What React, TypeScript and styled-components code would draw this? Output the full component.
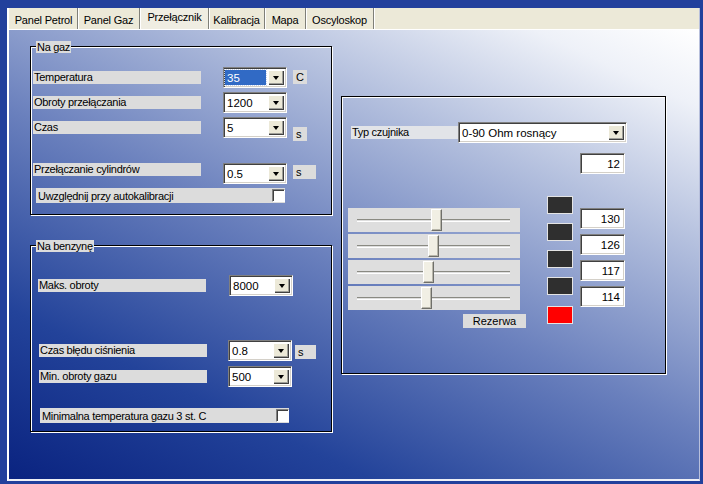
import React from 'react';
import styled, { createGlobalStyle } from 'styled-components';

const GlobalStyle = createGlobalStyle`
  html, body { margin: 0; padding: 0; }
  body {
    width: 703px;
    height: 484px;
    overflow: hidden;
    background: #22409c;
    font-family: "Liberation Sans", Arial, sans-serif;
  }
`

const Window = styled.div`
  width: 703px;
  height: 484px;
  box-sizing: border-box;
  padding: 8px 3px 3px 7px;
  background: #22409c;
  display: flex;
  flex-direction: column;
`

const Frame = styled.div`
  flex: 1;
  display: flex;
  flex-direction: column;
  border-left: 2px solid #ffffff;
  border-bottom: 2px solid #eef0f6;
  border-right: 1px solid #b8c0dc;
`

const TabStrip = styled.div`
  height: 21px;
  display: flex;
  padding-left: 1px;
  background: #ece9d8;
  border-bottom: 1px solid #ffffff;
`

const Tab = styled.div<{ $width: number; $active?: boolean }>`
  width: ${p => p.$width}px;
  box-sizing: border-box;
  display: flex;
  align-items: center;
  justify-content: center;
  padding-top: ${p => (p.$active ? 0 : 2)}px;
  padding-bottom: ${p => (p.$active ? 4 : 0)}px;
  font-size: 11px;
  letter-spacing: -0.2px;
  color: #000;
  border-right: 1px solid #7f7f78;
  box-shadow: 1px 0 0 #ffffff;
  ${p => p.$active && 'border-left: 1px solid #ffffff; background: #efede2;'}
`

const Content = styled.div`
  flex: 1;
  display: flex;
  align-items: flex-start;
  gap: 9px;
  padding: 11px 0 0 21px;
  background: linear-gradient(25deg, #0a2380 0%, #23439a 22%, #6a80bd 48%, #b4c0de 72%, #eef1f8 90%, #ffffff 100%);
`

const LeftColumn = styled.div`
  width: 302px;
  display: flex;
  flex-direction: column;
`

const Group = styled.div<{ $top: number; $bottom: number }>`
  position: relative;
  margin-top: ${p => p.$top}px;
  padding-bottom: ${p => p.$bottom}px;
  display: flex;
  flex-direction: column;
  border: 1px solid #000;
  box-shadow: 1px 1px 0 #ffffff, inset 1px 1px 0 #ffffff;
`

const GroupTitle = styled.div`
  position: absolute;
  top: -6px;
  left: 5px;
  height: 12px;
  line-height: 12px;
  padding: 0 1px;
  background: #dcdcdc;
  font-size: 11px;
  letter-spacing: -0.3px;
  color: #000;
`

const Row = styled.div<{ $gap: number; $indent: number }>`
  display: flex;
  align-items: center;
  height: 21px;
  margin-top: ${p => p.$gap}px;
  padding-left: ${p => p.$indent}px;
`

const Label = styled.div<{ $width?: number; $start?: boolean; $bg?: string }>`
  width: ${p => p.$width ?? 168}px;
  height: 13px;
  line-height: 13px;
  flex-shrink: 0;
  align-self: ${p => (p.$start ? 'flex-start' : 'center')};
  padding-left: 1px;
  box-sizing: border-box;
  background: ${p => p.$bg ?? '#dcdcdc'};
  font-size: 11px;
  letter-spacing: -0.3px;
  white-space: nowrap;
  overflow: hidden;
  color: #000;
`

const ComboBox = styled.div<{ $width?: number; $left?: number }>`
  width: ${p => p.$width ?? 64}px;
  height: 21px;
  flex-shrink: 0;
  margin-left: ${p => p.$left ?? 0}px;
  box-sizing: border-box;
  display: flex;
  align-items: center;
  background: #ffffff;
  border: 1px solid;
  border-color: #808080 #ffffff #ffffff #808080;
  box-shadow: inset 1px 1px 0 #404040, inset -1px -1px 0 #d4d0c8;
`

const ComboValue = styled.div<{ $selected?: boolean }>`
  flex: 1;
  align-self: stretch;
  margin: 2px 2px 2px 1px;
  padding-left: 2px;
  display: flex;
  align-items: center;
  font-size: 11.5px;
  white-space: nowrap;
  overflow: hidden;
  color: ${p => (p.$selected ? '#ffffff' : '#000')};
  background: ${p => (p.$selected ? '#316ac5' : 'transparent')};
  outline: ${p => (p.$selected ? '1px dotted #c8d4ec' : 'none')};
`

const DropButton = styled.div`
  width: 16px;
  height: 15px;
  margin-right: 2px;
  flex-shrink: 0;
  display: flex;
  align-items: center;
  justify-content: center;
  background: #ece9d8;
  box-shadow: inset 1px 1px 0 #ffffff, inset -1px -1px 0 #404040, inset -2px -2px 0 #a0a09a;
  &::after {
    content: '';
    width: 0;
    height: 0;
    border-left: 3.5px solid transparent;
    border-right: 3.5px solid transparent;
    border-top: 4px solid #000;
  }
`

const Unit = styled.div<{ $width: number; $top: number; $left: number }>`
  width: ${p => p.$width}px;
  height: 14px;
  line-height: 14px;
  align-self: flex-start;
  margin-top: ${p => p.$top}px;
  margin-left: ${p => p.$left}px;
  padding-left: 3px;
  box-sizing: border-box;
  background: #dcdcdc;
  font-size: 11px;
  color: #000;
`

const CheckRow = styled.div<{ $gap: number; $indent: number }>`
  width: 249px;
  height: 15px;
  margin-top: ${p => p.$gap}px;
  margin-left: ${p => p.$indent}px;
  display: flex;
  align-items: center;
  justify-content: space-between;
  padding-left: 2px;
  box-sizing: border-box;
  background: #dcdcdc;
  font-size: 11px;
  letter-spacing: -0.3px;
  color: #000;
`

const CheckBox = styled.div`
  width: 13px;
  height: 13px;
  box-sizing: border-box;
  background: #ffffff;
  border: 1px solid;
  border-color: #808080 #ffffff #ffffff #808080;
  box-shadow: inset 1px 1px 0 #404040;
`

const SensorPanel = styled.div`
  width: 325px;
  height: 278px;
  margin-top: 55px;
  box-sizing: border-box;
  display: flex;
  flex-direction: column;
  padding-top: 25px;
  border: 1px solid #000;
  box-shadow: 1px 1px 0 #ffffff, inset 1px 1px 0 #ffffff;
`

const SensorRow = styled.div`
  display: flex;
  align-items: center;
  padding-left: 9px;
`

const Edit = styled.div<{ $top?: number }>`
  width: 45px;
  height: 21px;
  margin-top: ${p => p.$top ?? 0}px;
  box-sizing: border-box;
  padding-right: 4px;
  display: flex;
  align-items: center;
  justify-content: flex-end;
  background: #ffffff;
  border: 1px solid;
  border-color: #808080 #ffffff #ffffff #808080;
  box-shadow: inset 1px 1px 0 #404040, inset -1px -1px 0 #d4d0c8;
  font-size: 11.5px;
  color: #000;
`

const TopEdit = styled(Edit)`
  align-self: flex-end;
  margin-right: 40px;
`

const Lower = styled.div`
  display: flex;
  align-items: flex-start;
  margin-top: 22px;
  padding-left: 6px;
`

const SliderBlock = styled.div`
  width: 172px;
  flex-shrink: 0;
`

const SliderColumn = styled.div`
  margin-top: 12px;
  display: flex;
  flex-direction: column;
  gap: 2px;
`

const Slider = styled.div`
  position: relative;
  height: 24px;
  background: #dedede;
`

const Track = styled.div`
  position: absolute;
  left: 9px;
  width: 153px;
  top: 11px;
  height: 1px;
  border-top: 1px solid #8a8a82;
  border-bottom: 1px solid #ffffff;
`

const Thumb = styled.div<{ $left: number }>`
  position: absolute;
  top: 1px;
  left: ${p => p.$left}px;
  width: 11px;
  height: 22px;
  box-sizing: border-box;
  background: #f1efe4;
  border: 1px solid;
  border-color: #ffffff #6f6f6a #6f6f6a #ffffff;
  box-shadow: inset -1px -1px 0 #b8b6aa;
`

const Reserve = styled.div`
  width: 63px;
  height: 14px;
  line-height: 14px;
  margin-top: 4px;
  margin-left: 115px;
  text-align: center;
  background: #dcdcdc;
  font-size: 11px;
  color: #000;
`

const BoxColumn = styled.div`
  margin-left: 27px;
  display: flex;
  flex-direction: column;
  gap: 9px;
`

const ColorBox = styled.div<{ $color: string; $top?: number }>`
  width: 26px;
  height: 18px;
  box-sizing: border-box;
  margin-top: ${p => p.$top ?? 0}px;
  background: ${p => p.$color};
  border: 1px solid #e4e4e4;
`

const EditColumn = styled.div`
  margin-left: 7px;
  margin-top: 12px;
  display: flex;
  flex-direction: column;
  gap: 5px;
`

const Combo: React.FC<{ value: string; width?: number; left?: number; selected?: boolean }> = ({ value, width, left, selected }) => (
  <ComboBox $width={width} $left={left}>
    <ComboValue $selected={selected}>{value}</ComboValue>
    <DropButton />
  </ComboBox>
)

const tabs = [
  { name: 'Panel Petrol', width: 68 },
  { name: 'Panel Gaz', width: 62 },
  { name: 'Przełącznik', width: 69, active: true },
  { name: 'Kalibracja', width: 56 },
  { name: 'Mapa', width: 41 },
  { name: 'Oscyloskop', width: 68 },
]

const sliders = [83, 80, 75, 73]
const readings = ['130', '126', '117', '114']

const App: React.FC = () => (
  <>
    <GlobalStyle />
    <Window>
      <Frame>
        <TabStrip>
          {tabs.map(t => <Tab key={t.name} $width={t.width} $active={t.active}>{t.name}</Tab>)}
        </TabStrip>
        <Content>
          <LeftColumn>
            <Group $top={5} $bottom={11}>
              <GroupTitle>Na gaz</GroupTitle>
              <Row $gap={20} $indent={2}>
                <Label>Temperatura</Label>
                <Combo value="35" left={22} selected />
                <Unit $width={14} $top={3} $left={6}>C</Unit>
              </Row>
              <Row $gap={4} $indent={2}>
                <Label>Obroty przełączania</Label>
                <Combo value="1200" left={22} />
              </Row>
              <Row $gap={4} $indent={2}>
                <Label>Czas</Label>
                <Combo value="5" left={22} />
                <Unit $width={14} $top={10} $left={6}>s</Unit>
              </Row>
              <Row $gap={25} $indent={2}>
                <Label $start>Przełączanie cylindrów</Label>
                <Combo value="0.5" left={22} />
                <Unit $width={23} $top={2} $left={6}>s</Unit>
              </Row>
              <CheckRow $gap={4} $indent={5}>
                Uwzględnij przy autokalibracji
                <CheckBox />
              </CheckRow>
            </Group>
            <Group $top={30} $bottom={8}>
              <GroupTitle>Na benzynę</GroupTitle>
              <Row $gap={29} $indent={7}>
                <Label>Maks. obroty</Label>
                <Combo value="8000" left={23} />
              </Row>
              <Row $gap={44} $indent={8}>
                <Label>Czas błędu ciśnienia</Label>
                <Combo value="0.8" left={21} />
                <Unit $width={21} $top={5} $left={3}>s</Unit>
              </Row>
              <Row $gap={5} $indent={8}>
                <Label>Min. obroty gazu</Label>
                <Combo value="500" left={21} />
              </Row>
              <CheckRow $gap={21} $indent={9}>
                Minimalna temperatura gazu 3 st. C
                <CheckBox />
              </CheckRow>
            </Group>
          </LeftColumn>
          <SensorPanel>
            <SensorRow>
              <Label $width={107} $bg="#e2e4e8">Typ czujnika</Label>
              <Combo value="0-90 Ohm rosnący" width={169} />
            </SensorRow>
            <TopEdit $top={10}>12</TopEdit>
            <Lower>
              <SliderBlock>
                <SliderColumn>
                  {sliders.map((left, i) => (
                    <Slider key={i}>
                      <Track />
                      <Thumb $left={left} />
                    </Slider>
                  ))}
                </SliderColumn>
                <Reserve>Rezerwa</Reserve>
              </SliderBlock>
              <BoxColumn>
                <ColorBox $color="#2f2f2f" />
                <ColorBox $color="#2f2f2f" />
                <ColorBox $color="#2f2f2f" />
                <ColorBox $color="#2f2f2f" />
                <ColorBox $color="#ff0000" $top={2} />
              </BoxColumn>
              <EditColumn>
                {readings.map(r => <Edit key={r}>{r}</Edit>)}
              </EditColumn>
            </Lower>
          </SensorPanel>
        </Content>
      </Frame>
    </Window>
  </>
)

export default App
